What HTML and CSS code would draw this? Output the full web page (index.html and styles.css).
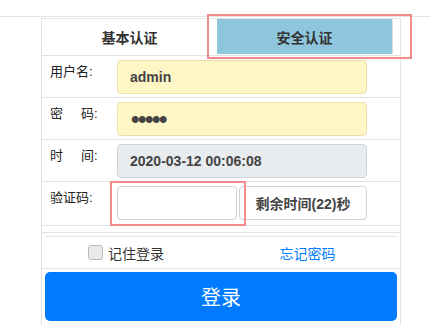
FILE: index.html
```html
<!DOCTYPE html>
<html lang="zh-CN">
<head>
  <meta charset="UTF-8">
  <meta name="viewport" content="width=device-width, initial-scale=1.0">
  <title>登录</title>
  <link rel="stylesheet" href="styles.css">
</head>
<body>

  <div class="topline"></div>

  <div class="panel">
    <div class="tabs">
      <div class="tab">基本认证</div>
      <div class="tab active">安全认证</div>
    </div>

    <div class="row">
      <div class="label">用户名:</div>
      <div class="field">
        <input type="text" class="input autofill" value="admin">
      </div>
    </div>

    <div class="row">
      <div class="label">密<span class="gap"></span>码:</div>
      <div class="field">
        <input type="password" class="input autofill pass" value="12345">
      </div>
    </div>

    <div class="row">
      <div class="label">时<span class="gap"></span>间:</div>
      <div class="field">
        <input type="text" class="input readonly" value="2020-03-12 00:06:08" readonly>
      </div>
    </div>

    <div class="row last">
      <div class="label">验证码:</div>
      <div class="field group">
        <input type="text" class="input captcha">
        <button class="countdown">剩余时间(22)秒</button>
      </div>
    </div>

    <div class="spacer"></div>

    <div class="options">
      <div class="options-inner">
        <label class="remember"><input type="checkbox" class="check"> 记住登录</label>
        <a href="#" class="forgot">忘记密码</a>
      </div>
    </div>

    <div class="submit">
      <button class="login">登录</button>
    </div>
  </div>

  <!-- highlight marks -->
  <div class="mark mark-tab"></div>
  <div class="mark mark-code"></div>

</body>
</html>
```

FILE: styles.css
```css
* {
  box-sizing: border-box;
  font-family: "Liberation Sans", "Noto Sans CJK SC", sans-serif;
}

body {
  margin: 0;
  background: #fff;
  position: relative;
  height: 325px;
  overflow: hidden;
}

.topline {
  height: 17px;
  border-bottom: 1px solid #e4e4e4;
}

.panel {
  margin: 1px 0 0 41px;
  width: 360px;
  height: 307px;
  border: 1px solid #e3e3e3;
  border-bottom: none;
}

/* tabs */
.tabs {
  display: flex;
  height: 37px;
  border-bottom: 1px solid #dee2e6;
}

.tab {
  width: 175px;
  display: flex;
  align-items: center;
  justify-content: center;
  font-size: 14px;
  font-weight: bold;
  color: #333;
}

.tab.active {
  width: 176px;
  background: #8ec7dd;
  border-right: 1px solid #dcdcdc;
  margin-bottom: 1px;
}

/* form rows */
.row {
  display: flex;
  padding: 4px 0 3px;
  border-bottom: 1px solid #dee2e6;
}

.row.last {
  padding-bottom: 5px;
}

.label {
  width: 75px;
  padding: 3px 0 0 8px;
  font-size: 13px;
  line-height: 18px;
  color: #222;
}

.gap {
  display: inline-block;
  width: 18px;
}

.field {
  width: 250px;
}

.input {
  width: 100%;
  height: 34px;
  padding: 0 12px;
  border: 1px solid #ced4da;
  border-radius: 4px;
  font-size: 14px;
  font-weight: bold;
  color: #444;
  outline: none;
}

.autofill {
  background: #fff6c6;
  border-color: #eedfa8;
}

/* bigger bullets, like the browser's own password dots */
.pass {
  font-size: 24px;
  letter-spacing: -1.4px;
  padding-left: 13px;
}

.readonly {
  background: #e9ecef;
}

.group {
  display: flex;
  gap: 2px;
}

.captcha {
  width: 120px;
  background: #fff;
}

.countdown {
  width: 130px;
  height: 34px;
  background: #fff;
  border: 1px solid #ced4da;
  border-radius: 4px;
  font-size: 14px;
  font-weight: bold;
  color: #444;
  padding: 0;
}

.spacer {
  height: 7px;
  border-bottom: 1px solid #dee2e6;
}

/* remember / forgot */
.options {
  padding: 3px 2px 0 3px;
  border-bottom: 1px solid #dee2e6;
}

.options-inner {
  display: flex;
  height: 32px;
  border-top: 1px solid #e6e6e6;
  align-items: center;
}

.remember {
  width: 172px;
  display: flex;
  align-items: center;
  justify-content: center;
  font-size: 14px;
  color: #333;
  padding-right: 10px;
}

.check {
  appearance: none;
  -webkit-appearance: none;
  width: 15px;
  height: 15px;
  margin: 0 5px 0 0;
  background: #e9e9e9;
  border: 1px solid #bcbcbc;
  border-radius: 3px;
}

.forgot {
  flex: 1;
  text-align: center;
  font-size: 14px;
  color: #007bff;
  text-decoration: none;
}

/* submit */
.submit {
  padding: 3px 2px 0 3px;
}

.login {
  width: 352px;
  height: 49px;
  background: #007bff;
  border: none;
  border-radius: 5px;
  color: #fff;
  font-size: 20px;
}

/* red highlight marks */
.mark {
  position: absolute;
  border: 2px solid #f38a8c;
}

.mark-tab {
  left: 207px;
  top: 14px;
  width: 205px;
  height: 45px;
}

.mark-code {
  left: 110px;
  top: 181px;
  width: 136px;
  height: 45px;
}
```
